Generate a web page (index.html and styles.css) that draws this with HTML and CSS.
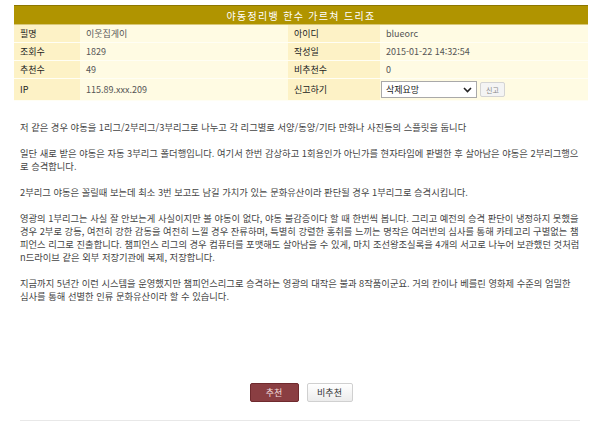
FILE: index.html
```html
<!DOCTYPE html>
<html lang="ko">

<head>
    <meta charset="UTF-8">
    <title>야동정리뱅 한수 가르쳐 드리죠</title>
    <link rel="stylesheet" href="styles.css">
</head>

<body>
    <table class="info">
        <colgroup>
            <col class="col-etiqueta">
            <col class="col-valor">
            <col class="col-etiqueta2">
            <col>
        </colgroup>
        <tr>
            <th colspan="4" class="titulo">야동정리뱅 한수 가르쳐 드리죠</th>
        </tr>
        <tr>
            <td class="etiqueta">필명</td>
            <td class="valor">이웃집게이</td>
            <td class="etiqueta">아이디</td>
            <td class="valor">blueorc</td>
        </tr>
        <tr>
            <td class="etiqueta">조회수</td>
            <td class="valor">1829</td>
            <td class="etiqueta">작성일</td>
            <td class="valor">2015-01-22 14:32:54</td>
        </tr>
        <tr>
            <td class="etiqueta">추천수</td>
            <td class="valor">49</td>
            <td class="etiqueta">비추천수</td>
            <td class="valor">0</td>
        </tr>
        <tr class="fila-ip">
            <td class="etiqueta">IP</td>
            <td class="valor">115.89.xxx.209</td>
            <td class="etiqueta">신고하기</td>
            <td class="valor">
                <div class="reporte">
                    <div class="selector">
                        <span>삭제요망</span>
                        <svg width="9" height="6" viewBox="0 0 9 6"><path d="M1 1 L4.5 4.5 L8 1" fill="none" stroke="#222" stroke-width="1.6"/></svg>
                    </div>
                    <button class="btn-reporte">신고</button>
                </div>
            </td>
        </tr>
    </table>

    <section class="contenido">
        <p>저 같은 경우 야동을 1리그/2부리그/3부리그로 나누고 각 리그별로 서양/동양/기타 만화나 사진등의 스플릿을 둡니다</p>
        <p>일단 새로 받은 야동은 자동 3부리그 폴더행입니다. 여기서 한번 감상하고 1회용인가 아닌가를 현자타임에 판별한 후 살아남은 야동은 2부리그행으로 승격합니다.</p>
        <p>2부리그 야동은 꼴릴때 보는데 최소 3번 보고도 남길 가치가 있는 문화유산이라 판단될 경우 1부리그로 승격시킵니다.</p>
        <p>영광의 1부리그는 사실 잘 안보는게 사실이지만 볼 야동이 없다, 야동 불감증이다 할 때 한번씩 봅니다. 그리고 예전의 승격 판단이 냉정하지 못했을 경우 2부로 강등, 여전히 강한 감동을 여전히 느낄 경우 잔류하며, 특별히 강렬한 홍취를 느끼는 명작은 여러번의 심사를 통해 카테고리 구별없는 챔피언스 리그로 진출합니다. 챔피언스 리그의 경우 컴퓨터를 포맷해도 살아남을 수 있게, 마치 조선왕조실록을 4개의 서고로 나누어 보관했던 것처럼 n드라이브 같은 외부 저장기관에 복제, 저장합니다.</p>
        <p>지금까지 5년간 이런 시스템을 운영했지만 챔피언스리그로 승격하는 영광의 대작은 불과 8작품이군요. 거의 칸이나 베를린 영화제 수준의 엄밀한<br>심사를 통해 선별한 인류 문화유산이라 할 수 있습니다.</p>
    </section>

    <div class="votos">
        <button class="btn-recomendar">추천</button>
        <button class="btn-no">비추천</button>
    </div>

    <div class="linea"></div>
</body>

</html>
```

FILE: styles.css
```css
body {
    margin: 0;
    padding: 5px 12px 0 14px;
    font-family: "Noto Sans CJK KR", "Liberation Sans", sans-serif;
    font-size: 9px;
    color: #333;
    background: #fff;
}

.info {
    width: 574px;
    border-collapse: collapse;
    table-layout: fixed;
}

.col-etiqueta {
    width: 66px;
}

.col-valor {
    width: 208px;
}

.col-etiqueta2 {
    width: 92px;
}

.titulo {
    height: 18px;
    background-color: #b09400;
    border-top: 1px solid #8c7600;
    border-bottom: 1px solid #d8c775;
    color: #fff;
    font-weight: normal;
    font-size: 10px;
    letter-spacing: 1.3px;
    text-align: center;
    padding: 0;
}

.info td {
    height: 17px;
    padding: 0 6px;
    border-bottom: 1px solid #fffef4;
    white-space: nowrap;
}

.etiqueta {
    background-color: #fdf2c6;
    color: #222;
}

.valor {
    background-color: #fffbe3;
    color: #555;
}

.fila-ip td {
    height: 21px;
}

.reporte {
    display: flex;
    align-items: center;
    gap: 3px;
    margin-left: -5px;
}

.selector {
    width: 86px;
    height: 15px;
    background: #fff;
    border: 1px solid #a9a9a9;
    display: flex;
    align-items: center;
    justify-content: space-between;
    padding: 0 4px;
    color: #222;
}

.btn-reporte {
    height: 15px;
    padding: 0 5px;
    font-family: inherit;
    font-size: 7px;
    color: #888;
    background: #f4f4f4;
    border: 1px solid #d4d4d4;
    border-radius: 2px;
}

.contenido {
    padding: 20px 6px 0 6px;
    font-size: 9.3px;
    line-height: 13px;
    color: #444;
}

.contenido p {
    margin: 0 0 13px 0;
}

.votos {
    display: flex;
    justify-content: center;
    gap: 8px;
    margin-top: 80px;
}

.btn-recomendar {
    width: 49px;
    height: 19px;
    font-family: inherit;
    font-size: 9px;
    color: #f3dcdc;
    background: #8a3e42;
    border: 1px solid #6f2a2e;
    border-radius: 2px;
}

.btn-no {
    width: 46px;
    height: 19px;
    font-family: inherit;
    font-size: 9px;
    color: #333;
    background: linear-gradient(#ffffff, #ececec);
    border: 1px solid #d0d0d0;
    border-radius: 2px;
}

.linea {
    margin: 18px 8px 0 6px;
    border-top: 1px solid #e8e8e8;
}
```
